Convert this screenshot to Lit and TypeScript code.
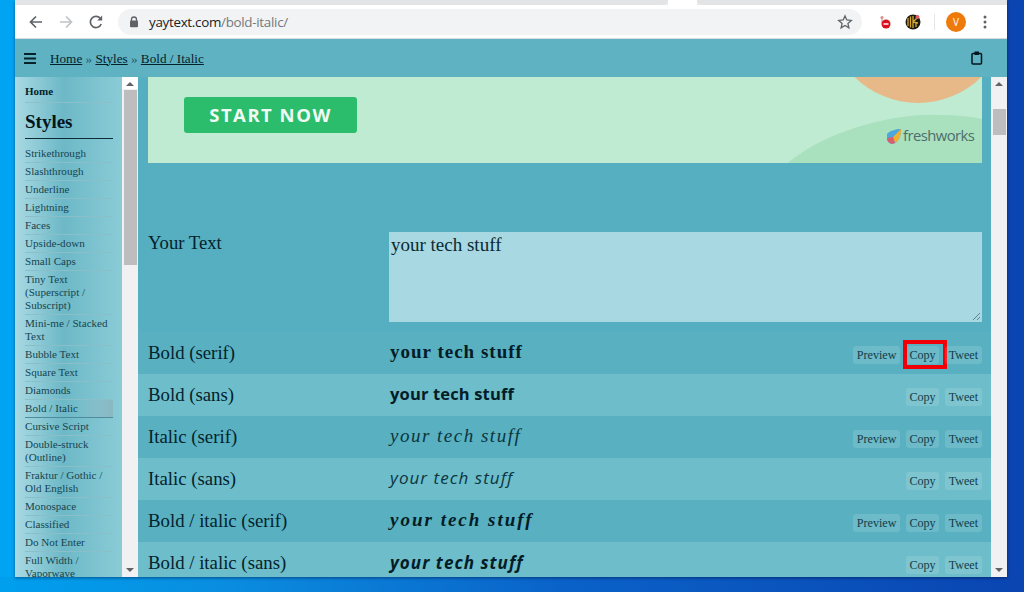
import { LitElement, html, css, svg } from "lit";
import { customElement } from "lit/decorators.js";

const NAV: { t: string; active?: boolean }[] = [
  { t: "Strikethrough" }, { t: "Slashthrough" }, { t: "Underline" }, { t: "Lightning" }, { t: "Faces" },
  { t: "Upside-down" }, { t: "Small Caps" }, { t: "Tiny Text (Superscript / Subscript)" }, { t: "Mini-me / Stacked Text" },
  { t: "Bubble Text" }, { t: "Square Text" }, { t: "Diamonds" }, { t: "Bold / Italic", active: true }, { t: "Cursive Script" },
  { t: "Double-struck (Outline)" }, { t: "Fraktur / Gothic / Old English" }, { t: "Monospace" }, { t: "Classified" },
  { t: "Do Not Enter" }, { t: "Full Width / Vaporwave" },
];
const ROWS = [
  { l: "Bold (serif)", c: "bs", p: true, hl: true },
  { l: "Bold (sans)", c: "bn", p: false },
  { l: "Italic (serif)", c: "is", p: true },
  { l: "Italic (sans)", c: "in", p: false },
  { l: "Bold / italic (serif)", c: "bis", p: true },
  { l: "Bold / italic (sans)", c: "bin", p: false },
];

@customElement("app-root")
export class AppRoot extends LitElement {
  static styles = css`
    :host { display: block; width: 1024px; height: 592px; overflow: hidden; position: relative;
      background: linear-gradient(90deg, #00a4f2 0 15px, #0a45b2 15px 100%); font-family: "Liberation Serif", serif; color: #04222c; }
    .floor { position: absolute; left: 0; right: 0; bottom: 0; height: 15px;
      background: linear-gradient(90deg, #009fee 0%, #0a8de0 22%, #0a62c8 55%, #0a45b2 100%); }
    .win { position: absolute; left: 15px; top: 0; width: 992px; height: 577px; display: flex; flex-direction: column;
      background: #fff; box-shadow: 0 1px 3px rgba(0,0,30,.45); }
    .tabs { height: 5px; background: #e8eaed; display: flex; flex: none; }
    .tabs .a { width: 653px; border-radius: 0 0 8px 0; background: #e3e4e6; }
    .tabs .gap { width: 29px; background: #fff; }
    .tabs .b { flex: 1; background: #e3e4e6; border-radius: 0 0 0 8px; }
    .bar { height: 34px; flex: none; display: flex; align-items: center; background: #fff; border-bottom: 1px solid #d8dcde; box-sizing: border-box; }
    .nav { width: 103px; flex: none; display: flex; align-items: center; padding-left: 12px; gap: 12px; box-sizing: border-box; }
    .nav svg { width: 18px; height: 18px; display: block; }
    .omni { width: 744px; height: 26px; flex: none; border-radius: 13px; background: #f1f3f4; display: flex; align-items: center; padding: 0 9px 0 11px; box-sizing: border-box; }
    .url { font: 13.4px/18px "Open Sans", sans-serif; color: #202124; letter-spacing: -.3px; margin-left: 10px; flex: 1; }
    .url span { color: #75797c; }
    .ext { flex: 1; display: flex; align-items: center; position: relative; }
    .e1 { margin-left: 17px; }
    .e2 { margin-left: 14px; }
    .sep { width: 1px; height: 16px; background: #e4e6e8; margin-left: 13px; }
    .av { width: 20px; height: 20px; border-radius: 50%; background: #ef7a0c; color: #fff; font: 10px/20px "Open Sans", sans-serif; text-align: center; margin-left: 11px; }
    .dots { margin-left: 17px; }
    .head { height: 38px; flex: none; background: #5fb2c1; display: flex; align-items: center; padding: 0 24px 0 9px; font-size: 13.2px; box-sizing: border-box; }
    .head svg { display: block; }
    .crumbs { margin: 1px 0 0 14px; flex: 1; color: #205868; }
    .crumbs a { color: #04222c; text-decoration: underline; }
    .body { flex: 1; display: flex; min-height: 0; }
    .side { width: 107px; flex: none; overflow: hidden; padding: 7px 9px 0 10px; box-sizing: border-box;
      background: linear-gradient(90deg, #a9dae3 0%, #6db8c7 45%, #8accd6 100%); }
    .home { font-size: 11px; font-weight: bold; line-height: 14px; padding-bottom: 4px; border-bottom: 1px solid #8cbfca; }
    .side h2 { margin: 7px 0 0; font-size: 19px; line-height: 24px; padding-bottom: 4px; border-bottom: 1px solid #0b2c36; color: #04161d; }
    .side ul { list-style: none; margin: 6px 0 0; padding: 0; }
    .side li { font-size: 11.1px; line-height: 13px; padding: 2px 0; border-bottom: 1px solid #8abfca; color: #174450; }
    .side li.on { background: linear-gradient(90deg, transparent 60%, #8ab8c3 100%); border-bottom: 1px solid #4f8c9b; }
    .sb { width: 16px; flex: none; background: #f1f1f3; position: relative; display: flex; flex-direction: column; align-items: center; }
    .sb.l { background: linear-gradient(#fff 0 12px, #f1f1f3 12px); }
    .up, .dn { width: 0; height: 0; border-left: 4px solid transparent; border-right: 4px solid transparent; position: absolute; left: 4px; }
    .up { top: 5px; border-bottom: 4px solid #606268; }
    .dn { bottom: 5px; border-top: 4px solid #606268; }
    .th { position: absolute; left: 2px; width: 13px; background: #bdbdbf; }
    .main { flex: 1; min-width: 0; overflow: hidden; background: #56afc1; position: relative; }
    .banner { margin: 0 9px 0 10px; height: 86px; background: #c0ebd3; position: relative; overflow: hidden; }
    .banner .cta { position: relative; margin: 20px 0 0 36px; width: 173px; height: 36px; border-radius: 3px; background: #2cbd6c; color: #f1fbf5;
      font: bold 18.5px/36px "Open Sans", sans-serif; text-align: center; letter-spacing: 1.5px; }
    .banner svg.bg { position: absolute; left: 0; top: 0; }
    .brand { position: absolute; left: 738px; bottom: 18px; display: flex; align-items: center; gap: 1px; font: 14.8px/18px "Open Sans", sans-serif; letter-spacing: -.55px; color: #4d6e6c; }
    .brand span { margin-top: -4px; }
    .your { display: flex; padding: 69px 9px 10px 10px; }
    .your .lab { width: 241px; font-size: 18.7px; line-height: 22px; flex: none; }
    .ta { flex: 1; height: 90px; background: #a8d8e1; font-size: 19px; line-height: 24px; padding: 1px 2px; box-sizing: border-box; position: relative; color: #0a2a33; }
    .grip { position: absolute; right: 1px; bottom: 1px; }
    .row { height: 42px; display: flex; align-items: center; padding: 0 9.5px 0 10px; box-sizing: border-box; background: #58b0c1; position: relative; }
    .row:nth-child(even) { background: #6dbdca; }
    .row .lab { width: 241px; flex: none; font-size: 18.8px; padding-bottom: 1px; }
    .sample { flex: 1; white-space: nowrap; color: #041c26; padding-bottom: 2px; padding-left: 1px; }
    .bs { font: bold 19px "Liberation Serif", serif; letter-spacing: 1px; }
    .bn { font: bold 16.500px "Open Sans", sans-serif; letter-spacing: .15px; padding-bottom: 4px; }
    .is { font: italic 19px "Liberation Serif", serif; letter-spacing: 1.5px; color: #0c3440; }
    .in { font: italic 17px "Open Sans", sans-serif; letter-spacing: 1.05px; color: #0c3440; padding-bottom: 4px; }
    .bis { font: italic bold 19px "Liberation Serif", serif; letter-spacing: 2px; }
    .bin { font: italic bold 17px "Open Sans", sans-serif; letter-spacing: 1.05px; }
    .acts { display: flex; gap: 6px; margin-top: 3px; }
    .btn { height: 18px; padding: 0 3.5px; border-radius: 3px; background: rgba(255,255,255,.13); font-size: 12.1px; line-height: 18px; color: #123c48; position: relative; }
    .hl { position: absolute; left: -3px; top: -6px; width: 44px; height: 29px; box-sizing: border-box; border: 4px solid #f20008; }
  `;

  private bars() {
    return html`<svg width="12" height="11" viewBox="0 0 12 11"><path d="M0 1h12M0 5.5h12M0 10h12" stroke="#04222c" stroke-width="2"/></svg>`;
  }

  render() {
    return html`
      <div class="floor"></div>
      <div class="win">
        <div class="tabs"><div class="a"></div><div class="gap"></div><div class="b"></div></div>
        <div class="bar">
          <div class="nav">
            <svg viewBox="0 0 18 18"><path d="M15 9H4M9 3.5 3.5 9 9 14.5" fill="none" stroke="#5f6368" stroke-width="1.7"/></svg>
            <svg viewBox="0 0 18 18"><path d="M3 9h11M9 3.5 14.5 9 9 14.5" fill="none" stroke="#c0c3c6" stroke-width="1.7"/></svg>
            <svg viewBox="0 0 18 18"><path d="M14.2 11a5.6 5.6 0 1 1-.6-5.2" fill="none" stroke="#5f6368" stroke-width="1.7"/><path d="M15.2 2.6v5h-5z" fill="#5f6368"/></svg>
          </div>
          <div class="omni">
            <svg width="10" height="12" viewBox="0 0 10 12"><path d="M2.5 5V3.5a2.5 2.5 0 0 1 5 0V5" fill="none" stroke="#5f6368" stroke-width="1.3"/><rect x="1" y="4.6" width="8" height="6.6" rx="1" fill="#5f6368"/></svg>
            <div class="url">yaytext.com<span>/bold-italic/</span></div>
            <svg width="16" height="16" viewBox="0 0 16 16"><path d="M8 1.9 9.8 6l4.5.4-3.4 3 1 4.4L8 11.5l-3.9 2.3 1-4.4-3.4-3L6.200 6z" fill="none" stroke="#5f6368" stroke-width="1.3"/></svg>
          </div>
          <div class="ext">
            <svg class="e1" width="12" height="14" viewBox="0 0 12 14"><circle cx="3" cy="2.500" r="1.600" fill="#d8908c"/><path d="M3 4v4" stroke="#c9b2a8" stroke-width="1.500"/><circle cx="7" cy="9" r="4.500" fill="#dd0f1c"/><path d="M4.500 9h5" stroke="#fff" stroke-width="1.500"/></svg>
            <svg class="e2" width="16" height="16" viewBox="0 0 16 16"><circle cx="8" cy="8" r="7.500" fill="#1d1b10"/><path d="M3 4v8M5.500 2.500v11M8 2v12M8 8l4-4M8 8l5 1M11 9v4" fill="none" stroke="#d6a92e" stroke-width="1.300"/><circle cx="12.500" cy="3" r="2" fill="#dd5a66"/></svg>
            <div class="sep"></div>
            <div class="av">V</div>
            <svg class="dots" width="4" height="14" viewBox="0 0 4 14"><circle cx="2" cy="2" r="1.500" fill="#5f6368"/><circle cx="2" cy="7" r="1.500" fill="#5f6368"/><circle cx="2" cy="12" r="1.500" fill="#5f6368"/></svg>
          </div>
        </div>
        <div class="head">
          ${this.bars()}
          <div class="crumbs"><a>Home</a> » <a>Styles</a> » <a>Bold / Italic</a></div>
          <svg width="12" height="14" viewBox="0 0 12 14"><rect x="1" y="2.500" width="9.500" height="10.500" rx="1" fill="none" stroke="#04161d" stroke-width="1.500"/><rect x="3.500" y="0.500" width="4.500" height="3.500" fill="#04161d"/></svg>
        </div>
        <div class="body">
          <div class="side">
            <div class="home">Home</div>
            <h2>Styles</h2>
            <ul>${NAV.map((n) => html`<li class=${n.active ? "on" : ""}>${n.t}</li>`)}</ul>
          </div>
          <div class="sb l"><div class="up"></div><div class="th" style="top:13px;height:175px"></div><div class="dn"></div></div>
          <div class="main">
            <div class="banner">
              <svg class="bg" width="834" height="86" viewBox="0 0 834 86">
                ${svg`<circle cx="770" cy="-64.500" r="90.500" fill="#e7b988"/><path d="M640 86C680 52 750 36 790 38C810 38 825 40 834 42V86Z" fill="#a9e0bd"/>`}
              </svg>
              <div class="cta">START NOW</div>
              <div class="brand">
                <svg width="16" height="17" viewBox="0 0 16 17"><path d="M1 6C3 3 10 1 15 1C15 6 14 12 9 15C6 17 1 15 1 10Z" fill="#4aa7e0"/><path d="M7 9 15 1C15 6 14 12 9 15Z" fill="#f0b030"/><path d="M1 10 7 9 9 15C6 17 1 15 1 10Z" fill="#d8606f"/></svg>
                <span>freshworks</span>
              </div>
            </div>
            <div class="your">
              <div class="lab">Your Text</div>
              <div class="ta">your tech stuff
                <svg class="grip" width="9" height="9" viewBox="0 0 9 9"><path d="M8 1 1 8M8 5 5 8" stroke="#60808a"/></svg>
              </div>
            </div>
            <div>
              ${ROWS.map((r) => html`
                <div class="row">
                  <div class="lab">${r.l}</div>
                  <div class="sample ${r.c}">your tech stuff</div>
                  <div class="acts">
                    ${r.p ? html`<div class="btn">Preview</div>` : ""}
                    <div class="btn">Copy${r.hl ? html`<div class="hl"></div>` : ""}</div>
                    <div class="btn">Tweet</div>
                  </div>
                </div>`)}
            </div>
          </div>
          <div class="sb"><div class="up"></div><div class="th" style="top:32px;height:26px"></div><div class="dn"></div></div>
        </div>
      </div>
    `;
  }
}
